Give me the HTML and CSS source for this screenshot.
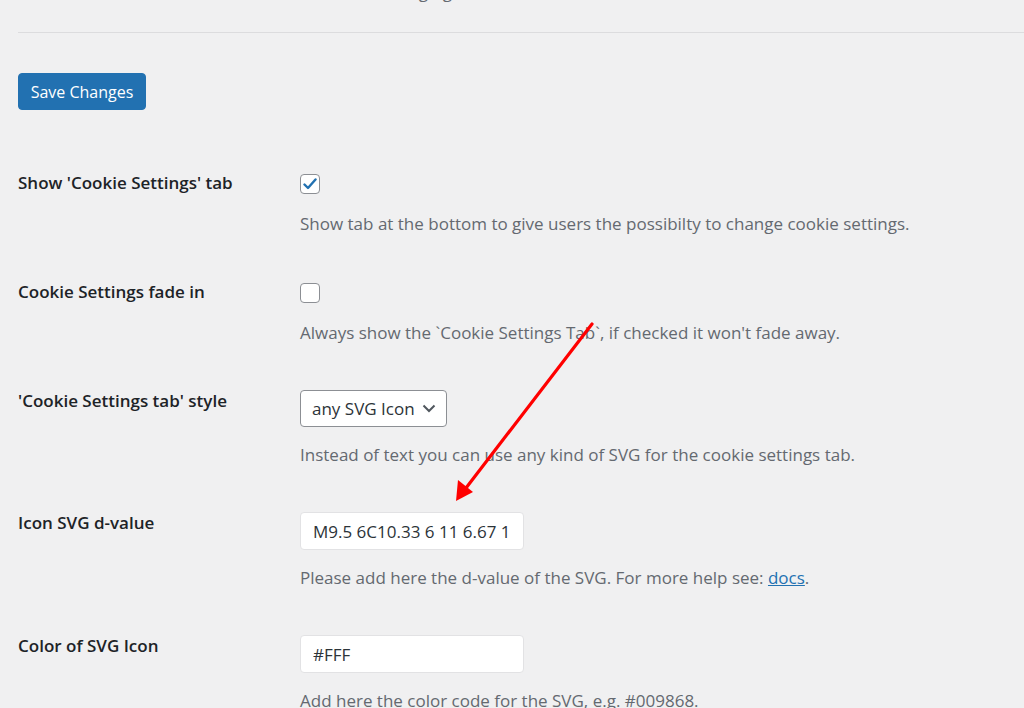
FILE: index.html
```html
<!DOCTYPE html>
<html lang="en">
    <head>
        <meta charset="UTF-8" />
        <title>Cookie Settings</title>
        <link rel="stylesheet" href="styles.css">
    </head>
    <body>
        <div class="wrap">
            <p class="intro">Leave this box as it is when changing</p>
            <hr class="sep">

            <button class="button-primary" type="button">Save Changes</button>

            <div class="form-table">
                <div class="row">
                    <div class="label">Show 'Cookie Settings' tab</div>
                    <div class="field">
                        <span class="check">
                            <svg width="14" height="12" viewBox="0 0 14 12"><path d="M1.5 6.5 L5 10 L12.5 1.5" fill="none" stroke="#2271b1" stroke-width="2.4" stroke-linecap="round" stroke-linejoin="round"/></svg>
                        </span>
                        <p class="description">Show tab at the bottom to give users the possibilty to change cookie settings.</p>
                    </div>
                </div>

                <div class="row">
                    <div class="label">Cookie Settings fade in</div>
                    <div class="field">
                        <span class="check"></span>
                        <p class="description">Always show the `Cookie Settings Tab`, if checked it won't fade away.</p>
                    </div>
                </div>

                <div class="row">
                    <div class="label">'Cookie Settings tab' style</div>
                    <div class="field">
                        <div class="select">
                            <span>any SVG Icon</span>
                            <svg width="14" height="9" viewBox="0 0 14 9"><path d="M1.5 1.5 L7 7 L12.5 1.5" fill="none" stroke="#50575e" stroke-width="2"/></svg>
                        </div>
                        <p class="description">Instead of text you can use any kind of SVG for the cookie settings tab.</p>
                    </div>
                </div>

                <div class="row">
                    <div class="label">Icon SVG d-value</div>
                    <div class="field">
                        <input class="text" type="text" value="M9.5 6C10.33 6 11 6.67 11 7.5S10.33 9 9.5 9 8 8.33 8 7.5 8.67 6 9.5 6z">
                        <p class="description">Please add here the d-value of the SVG. For more help see: <a href="#">docs</a>.</p>
                    </div>
                </div>

                <div class="row">
                    <div class="label">Color of SVG Icon</div>
                    <div class="field">
                        <input class="text" type="text" value="#FFF">
                        <p class="description">Add here the color code for the SVG, e.g. #009868.</p>
                    </div>
                </div>
            </div>
        </div>

        <svg class="arrow" width="1024" height="708" viewBox="0 0 1024 708">
            <line x1="592" y1="324" x2="466" y2="488" stroke="#f00" stroke-width="3.2" stroke-linecap="round"/>
            <polygon points="456,501 458,480 473,492" fill="#f00"/>
        </svg>
    </body>
</html>
```

FILE: styles.css
```css
body {
    margin: 0;
    background: #f0f0f1;
    font-family: "Open Sans", "Noto Sans", sans-serif;
    font-size: 17px;
    color: #1d2327;
    overflow: hidden;
}

.wrap {
    padding-left: 18px;
}

.intro {
    width: 434px;
    margin: -20px 0 0;
    line-height: 24px;
    text-align: right;
    color: #646970;
}

.sep {
    border: 0;
    border-top: 1px solid #dcdcde;
    margin: 28px 0 0;
}

.button-primary {
    display: block;
    margin-top: 40px;
    width: 128px;
    height: 37px;
    background: #2271b1;
    border: 1px solid #2271b1;
    border-radius: 4px;
    color: #fff;
    font-family: inherit;
    font-size: 16px;
    padding: 0;
}

.form-table {
    margin-top: 39px;
}

.row {
    display: flex;
    padding: 22px 0;
}

.label {
    width: 282px;
    flex: none;
    font-weight: 600;
    line-height: 24px;
}

.field {
    flex: 1;
}

.description {
    margin: 16px 0 0;
    line-height: 24px;
    color: #646970;
}

.description a {
    color: #2271b1;
}

.check {
    display: flex;
    align-items: center;
    justify-content: center;
    width: 18px;
    height: 18px;
    margin-top: 3px;
    background: #fff;
    border: 1px solid #8c8f94;
    border-radius: 4px;
}

.check + .description {
    margin-top: 18px;
}

.select {
    display: flex;
    align-items: center;
    justify-content: space-between;
    box-sizing: border-box;
    width: 147px;
    height: 37px;
    margin-top: 1px;
    padding: 0 10px 0 11px;
    background: #fff;
    border: 1px solid #8c8f94;
    border-radius: 4px;
    color: #2c3338;
}

.text {
    display: block;
    box-sizing: border-box;
    width: 224px;
    height: 38px;
    margin-top: 1px;
    padding: 0 12px;
    background: #fff;
    border: 1px solid #e2e2e4;
    border-radius: 4px;
    font-family: inherit;
    font-size: 17px;
    color: #2c3338;
}

.arrow {
    position: absolute;
    left: 0;
    top: 0;
    pointer-events: none;
}
```
